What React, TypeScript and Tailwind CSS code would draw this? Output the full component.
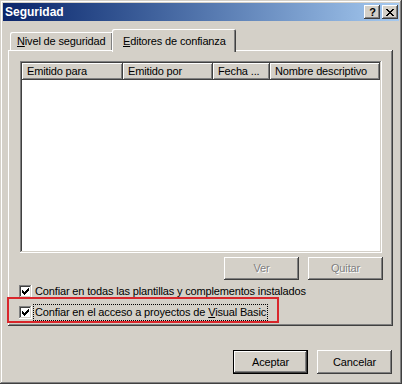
import React from "react";

const raised =
  "shadow-[inset_-1px_-1px_0_#404040,inset_1px_1px_0_#ffffff,inset_-2px_-2px_0_#808080,inset_2px_2px_0_#d4d0c8]";

function Check() {
  return (
    <div className="w-[13px] h-[13px] shrink-0 bg-white shadow-[inset_-1px_-1px_0_#ffffff,inset_1px_1px_0_#808080,inset_-2px_-2px_0_#d4d0c8,inset_2px_2px_0_#404040] flex items-center justify-center">
      <svg width="7" height="7" viewBox="0 0 7 7" shapeRendering="crispEdges">
        <path d="M0 2 L2 4 L7 -1 L7 2 L2 7 L0 5 Z" fill="#000" />
      </svg>
    </div>
  );
}

function HeaderCell({ w, children }: { w?: string; children: React.ReactNode }) {
  return (
    <div
      className={`${w ?? "flex-1"} h-[17px] flex items-center pl-[5px] text-black whitespace-nowrap overflow-hidden shadow-[inset_-1px_-1px_0_#404040,inset_1px_1px_0_#ffffff,inset_-2px_-2px_0_#808080]`}
    >
      {children}
    </div>
  );
}

export default function App() {
  return (
    <div
      className="w-[402px] h-[384px] bg-[#d4d0c8] p-[3px] flex flex-col text-[11px] tracking-[-0.15px] text-black shadow-[inset_-1px_-1px_0_#404040,inset_1px_1px_0_#d4d0c8,inset_-2px_-2px_0_#808080,inset_2px_2px_0_#ffffff]"
      style={{ fontFamily: '"Liberation Sans", Arial, sans-serif' }}
    >
      {/* Title bar */}
      <div className="h-[18px] flex items-center justify-between bg-gradient-to-r from-[#0a246a] to-[#a6caf0] pl-[2px] pr-[1px]">
        <span className="text-white font-bold text-[12px] tracking-normal leading-none">Seguridad</span>
        <div className="flex gap-[2px]">
          <div className={`w-[16px] h-[14px] bg-[#d4d0c8] ${raised} flex items-center justify-center`}>
            <span className="font-bold text-[11px] leading-none pl-[1px]">?</span>
          </div>
          <div className={`w-[16px] h-[14px] bg-[#d4d0c8] ${raised} flex items-center justify-center`}>
            <svg width="8" height="7" viewBox="0 0 8 7" shapeRendering="crispEdges">
              <path
                d="M0 0h2v1h1v1h2v-1h1v-1h2v1h-1v1h-1v1h-1v1h1v1h1v1h1v1h-2v-1h-1v-1h-2v1h-1v1h-2v-1h1v-1h1v-1h1v-1h-1v-1h-1v-1h-1z"
                fill="#000"
              />
            </svg>
          </div>
        </div>
      </div>

      {/* Tabs + panel */}
      <div className="px-[5px] mt-[8px] flex flex-col">
        <div className="flex items-end h-[21px] pl-[2px]">
          <div className="w-[103px] h-[18px] flex items-center pl-[7px] shadow-[inset_1px_1px_0_#ffffff,inset_-1px_0_0_#404040,inset_-2px_0_0_#808080] rounded-tl-[2px]">
            <span>
              <span className="underline">N</span>ivel de seguridad
            </span>
          </div>
          <div className="relative z-10 -ml-[1px] -mb-[2px] w-[124px] h-[23px] bg-[#d4d0c8] flex items-start pt-[4px] pl-[11px] shadow-[inset_1px_1px_0_#ffffff,inset_-1px_0_0_#404040,inset_-2px_0_0_#808080] rounded-t-[2px]">
            <span>
              <span className="underline">E</span>ditores de confianza
            </span>
          </div>
        </div>

        <div className="w-[385px] h-[276px] flex flex-col pt-[11px] pl-[12px] shadow-[inset_-1px_-1px_0_#404040,inset_1px_1px_0_#ffffff,inset_-2px_-2px_0_#808080]">
          {/* List */}
          <div className="w-[362px] h-[192px] bg-white p-[2px] shadow-[inset_-1px_-1px_0_#ffffff,inset_1px_1px_0_#808080,inset_-2px_-2px_0_#d4d0c8,inset_2px_2px_0_#404040]">
            <div className="flex bg-[#d4d0c8]">
              <HeaderCell w="w-[101px]">Emitido para</HeaderCell>
              <HeaderCell w="w-[90px]">Emitido por</HeaderCell>
              <HeaderCell w="w-[57px]">Fecha ...</HeaderCell>
              <HeaderCell>Nombre descriptivo</HeaderCell>
            </div>
          </div>

          {/* Ver / Quitar */}
          <div className="w-[363px] mt-[4px] flex justify-end gap-[9px]">
            {["Ver", "Quitar"].map((t) => (
              <div
                key={t}
                className={`w-[75px] h-[23px] ${raised} flex items-center justify-center text-[#808080] [text-shadow:1px_1px_0_#ffffff]`}
              >
                {t}
              </div>
            ))}
          </div>

          {/* Checkboxes */}
          <div className="-ml-[1px] mt-[5px] h-[13px] flex items-center">
            <Check />
            <span className="ml-[1px] px-[1px] border border-transparent leading-[15px] whitespace-nowrap">
              Confiar en todas las plantillas y complementos instalados
            </span>
          </div>
          <div className="relative -ml-[1px] mt-[8px] h-[13px] flex items-center">
            <Check />
            <span className="ml-[1px] px-[1px] border border-dotted border-black leading-[15px] whitespace-nowrap">
              Confiar en el acceso a proyectos de <span className="underline">V</span>isual Basic
            </span>
            <div className="absolute -left-[12px] -top-[9px] w-[272px] h-[26px] border-[2px] border-[#d9262b] pointer-events-none" />
          </div>
        </div>

        {/* Footer buttons */}
        <div className="mt-[24px] flex justify-end gap-[9px] pr-[2px]">
          <div className="w-[75px] h-[24px] border border-black">
            <div className={`w-full h-full ${raised} flex items-center justify-center`}>Aceptar</div>
          </div>
          <div className={`w-[75px] h-[24px] ${raised} flex items-center justify-center`}>Cancelar</div>
        </div>
      </div>
    </div>
  );
}
